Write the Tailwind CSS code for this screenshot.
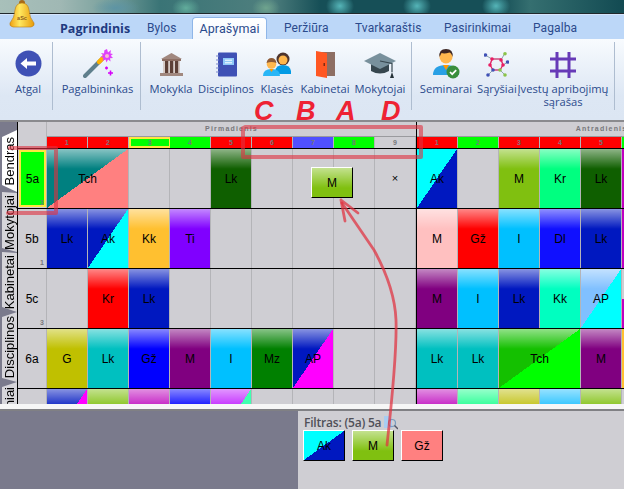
<!DOCTYPE html>
<html lang="lt">
<head>
<meta charset="utf-8">
<title>aSc Timetables</title>
<script src="https://cdn.jsdelivr.net/npm/@tailwindcss/browser@4"></script>
</head>
<body class="m-0 bg-[#cfced3]">
<div class="relative w-[624px] h-[489px] overflow-hidden flex flex-col font-['Liberation_Sans',sans-serif]">

  <!-- title bar -->
  <div class="h-[13px] shrink-0 bg-[radial-gradient(ellipse_14px_12px_at_340px_6px,#55b5b8,transparent),radial-gradient(ellipse_14px_12px_at_417px_6px,#55b5b8,transparent),radial-gradient(ellipse_14px_12px_at_496px_6px,#55b5b8,transparent),radial-gradient(ellipse_14px_10px_at_186px_8px,#62ad9c,transparent),radial-gradient(ellipse_14px_10px_at_266px_8px,#6fa48e,transparent),radial-gradient(ellipse_24px_10px_at_116px_8px,#5d94a4,transparent),linear-gradient(to_right,#a8c0ba,#a0b8b4_60px,#78a09c_110px,#3a7476_160px,#4f7f7e_270px,#164f57_320px,#164f57_500px,#356f70_530px,#124a52_624px)]"></div>
  <div class="h-[1px] shrink-0 bg-[#20282c]"></div>

  <!-- tab strip -->
  <div class="h-[25px] shrink-0 bg-[#bcd7f8] border-t border-[#d5e5fb] flex items-end text-[12px] text-[#2b4a8c] font-['Roboto',sans-serif] tracking-[0.1px] leading-[21px] text-center whitespace-nowrap">
    <div class="w-[58px] ml-[60px] font-bold text-[#1f3a80] text-[12.5px] font-['Open_Sans',sans-serif] tracking-normal">Pagrindinis</div>
    <div class="w-[28px] ml-[29px]">Bylos</div>
    <div class="w-[75px] ml-[17px] h-[22px] rounded-t-[4px] border border-b-0 border-[#8fb6e8] bg-[linear-gradient(#ffffff,#f4f8fd)] leading-[22px] text-[12.5px]">Aprašymai</div>
    <div class="w-[42px] ml-[17px]">Peržiūra</div>
    <div class="w-[60px] ml-[29px]">Tvarkaraštis</div>
    <div class="w-[60px] ml-[29px]">Pasirinkimai</div>
    <div class="w-[41px] ml-[29px]">Pagalba</div>
  </div>

  <!-- ribbon -->
  <div class="h-[81px] shrink-0 bg-[linear-gradient(#f8fbfe,#dde7f4_70%,#dce6f3)] flex text-[11.2px] leading-[13px] text-[#2b4a8c] font-['Open_Sans',sans-serif] text-center pt-[3px] pl-[4px] whitespace-nowrap">
    <div class="w-[48px] flex flex-col items-center shrink-0">
      <div class="h-[38px] flex items-end pb-[3px]">
        <svg width="27" height="27" viewBox="0 0 27 27"><circle cx="13.5" cy="13.5" r="13" fill="#3f51b5"/><path d="M5.5 13.5 12 8v3.6h9v3.8h-9V19z" fill="#fff"/></svg>
      </div>
      <div class="mt-[2px]">Atgal</div>
    </div>
    <div class="w-[1px] h-[68px] bg-[#aebdd0] shrink-0"></div>
    <div class="w-[87px] pl-[2px] flex flex-col items-center shrink-0">
      <div class="h-[38px] flex items-end pb-[1px]">
        <svg width="30" height="30" viewBox="0 0 30 30"><path d="M2 27 19 10" stroke="#5f7f8c" stroke-width="4" stroke-linecap="round"/><path d="M16 13 21 8" stroke="#ffb300" stroke-width="4.5" stroke-linecap="round"/><path d="M24 0l1 3.5L28 1l-.6 3.6 2.6.4-2.2 1.8L30 9l-3 .2.6 3.2-2.6-2-1.4 3-1.2-3-2.8 1.4.8-3-3-.8 2.8-1.4L18 4l3 .5.4-3.2z" fill="#e040fb"/><circle cx="24" cy="7" r="2" fill="#f8bbd0"/><path d="M22 19h3M23.5 17.5v3" stroke="#d500f9" stroke-width="1.4"/><path d="M25 24h5M27.5 21.5v5" stroke="#d500f9" stroke-width="1.6"/></svg>
      </div>
      <div class="mt-[2px]">Pagalbininkas</div>
    </div>
    <div class="w-[1px] h-[68px] bg-[#aebdd0] shrink-0"></div>
    <div class="w-[2px] shrink-0"></div>
    <div class="w-[56px] flex flex-col items-center shrink-0">
      <div class="h-[38px] flex items-end pb-[3px]">
        <svg width="25" height="25" viewBox="0 0 25 25"><path d="M12.5 1 23 7H2z" fill="#a1887f"/><rect x="3" y="7" width="19" height="2" fill="#8d6e63"/><rect x="4" y="9" width="17" height="12" fill="#d7ccc8"/><rect x="6" y="9" width="3.2" height="12" fill="#5d4037"/><rect x="11" y="9" width="3.2" height="12" fill="#5d4037"/><rect x="16" y="9" width="3.2" height="12" fill="#5d4037"/><rect x="1" y="21" width="23" height="3" fill="#a1887f"/></svg>
      </div>
      <div class="mt-[2px]">Mokykla</div>
    </div>
    <div class="w-[54px] flex flex-col items-center shrink-0">
      <div class="h-[38px] flex items-end pb-[3px]">
        <svg width="21" height="25" viewBox="0 0 21 25"><rect x="2" y="0.500" width="19" height="24" rx="1" fill="#3f51b5"/><path d="M0 4h3M0 8h3M0 12h3M0 16h3M0 20h3" stroke="#7986cb" stroke-width="1.2"/><rect x="7" y="6" width="11" height="7" fill="#90caf9"/><path d="M9 8.200h7M9 10.800h7" stroke="#fff" stroke-width="1"/></svg>
      </div>
      <div class="mt-[2px]">Disciplinos</div>
    </div>
    <div class="w-[48px] flex flex-col items-center shrink-0">
      <div class="h-[38px] flex items-end pb-[3px]">
        <svg width="29" height="25" viewBox="0 0 29 25"><circle cx="20" cy="7" r="6.500" fill="#4e342e"/><circle cx="20" cy="8" r="4.500" fill="#ffb74d"/><path d="M12 19q1-6 8-6t8 6v3H12z" fill="#039be5"/><circle cx="8.500" cy="12" r="4.800" fill="#ffb74d"/><path d="M3.500 11q1-5 5-5t5 5q-5-2-10 0z" fill="#8d5a36"/><path d="M0 24q0-7 8.500-7T17 24z" fill="#29b6f6"/><path d="M6.500 17h4l-2 3z" fill="#ff9800"/></svg>
      </div>
      <div class="mt-[2px]">Klasės</div>
    </div>
    <div class="w-[48px] flex flex-col items-center shrink-0">
      <div class="h-[38px] flex items-end pb-[2px]">
        <svg width="19" height="27" viewBox="0 0 19 27"><rect x="3" y="1" width="16" height="24" fill="#8d6e63"/><path d="M0 0 11 2V27L0 25z" fill="#ff5722"/><rect x="7.500" y="12" width="1.500" height="3" fill="#7f2a10"/></svg>
      </div>
      <div class="mt-[2px]">Kabinetai</div>
    </div>
    <div class="w-[62px] flex flex-col items-center shrink-0">
      <div class="h-[38px] flex items-end pb-[1px]">
        <svg width="32" height="27" viewBox="0 0 32 27"><path d="M7 11v8q9 5 18 0v-8z" fill="#37474f"/><path d="M16 1 32 9 16 17 0 9z" fill="#78909c"/><path d="M16 9 28 11.500V20" stroke="#37474f" stroke-width="1.200" fill="none"/><path d="M28 20l2 6h-4z" fill="#263238"/></svg>
      </div>
      <div class="mt-[2px]">Mokytojai</div>
    </div>
    <div class="w-[1px] h-[68px] bg-[#aebdd0] shrink-0"></div>
    <div class="w-[68px] flex flex-col items-center shrink-0">
      <div class="h-[38px] flex items-end pb-[1px] pl-[1px]">
        <svg width="27" height="30" viewBox="0 0 27 30"><circle cx="13" cy="8" r="6.500" fill="#ffb74d"/><path d="M6.500 8q-1-8 6.500-8t6.500 8q-1-4-3-4.500-5 1.500-8 .5z" fill="#3e2723"/><path d="M0 26q0-10 13-10t13 10z" fill="#29a0e5"/><path d="M10 16h6l-3 5z" fill="#ff9800"/><circle cx="20" cy="23" r="6.500" fill="#388e3c"/><path d="M17 23l2.200 2.200 4-4" stroke="#fff" stroke-width="1.700" fill="none"/></svg>
      </div>
      <div class="mt-[2px]">Seminarai</div>
    </div>
    <div class="w-[32px] flex flex-col items-center shrink-0">
      <div class="h-[38px] flex items-end pb-[3px]">
        <svg width="25" height="25" viewBox="0 0 25 25" class="shrink-0"><path d="M8 7 1 3M17 8 21 1M8 7h9M8 7 6 13M17 8l2 5M6 13l3 5M19 13l-3 5M9 18h7M9 18 4 23M16 18l5 5M19 13l5-3" stroke="#90a4ae" stroke-width="1" fill="none"/><path d="M8 7h9l2 6-3 5H9l-3-5z" stroke="#e91e63" stroke-width="1.200" fill="none"/><circle cx="1.500" cy="3" r="1.800" fill="#3f51b5"/><circle cx="21" cy="1.800" r="1.800" fill="#8bc34a"/><circle cx="8" cy="7" r="1.800" fill="#e91e63"/><circle cx="17" cy="8" r="1.800" fill="#e91e63"/><circle cx="6" cy="13" r="1.800" fill="#e91e63"/><circle cx="19" cy="13" r="1.800" fill="#e91e63"/><circle cx="23.500" cy="10" r="1.800" fill="#3f51b5"/><circle cx="9" cy="18" r="1.800" fill="#3f51b5"/><circle cx="16" cy="18" r="1.800" fill="#8bc34a"/><circle cx="4" cy="23" r="1.800" fill="#3f51b5"/><circle cx="21" cy="23" r="1.800" fill="#8bc34a"/></svg>
      </div>
      <div class="mt-[2px] w-[38px] shrink-0">Sąryšiai</div>
    </div>
    <div class="w-[102px] flex flex-col items-center shrink-0">
      <div class="h-[38px] flex items-end pb-[2px]">
        <svg width="26" height="26" viewBox="0 0 26 26"><path d="M7 0V26M19 0V26M0 7H26M0 19H26" stroke="#673ab7" stroke-width="3" fill="none"/></svg>
      </div>
      <div class="mt-[2px]">Įvestų apribojimų<br>sąrašas</div>
    </div>
    <div class="w-[1px] h-[68px] bg-[#aebdd0] shrink-0"></div>
  </div>
  <div class="h-[2px] shrink-0 bg-[#8a8a8e]"></div>

  <!-- timetable -->
  <div class="h-[282px] shrink-0 flex overflow-hidden bg-[#cfced3]">
    <!-- vertical tabs -->
    <div class="w-[18px] shrink-0 bg-[#7a7a8c] border-r border-black pl-[2px] pt-[8px] flex flex-col overflow-hidden text-[13px] leading-[14px] text-black whitespace-nowrap">
      <div class="h-[62px] shrink-0 bg-white flex justify-center items-center [clip-path:polygon(0_7px,100%_0,100%_100%,0_calc(100%-7px))]"><span class="[writing-mode:vertical-rl] rotate-180">Bendras</span></div>
      <div class="h-[60px] shrink-0 bg-[#d6d5da] flex justify-center items-center [clip-path:polygon(0_0,100%_1px,100%_100%,0_calc(100%-4px))]"><span class="[writing-mode:vertical-rl] rotate-180">Mokytojai</span></div>
      <div class="h-[60px] shrink-0 bg-[#d6d5da] flex justify-center items-center [clip-path:polygon(0_0,100%_1px,100%_100%,0_calc(100%-5px))]"><span class="[writing-mode:vertical-rl] rotate-180">Kabinetai</span></div>
      <div class="h-[70px] shrink-0 bg-[#d6d5da] flex justify-center items-center [clip-path:polygon(0_5px,100%_0,100%_100%,0_calc(100%-4px))]"><span class="[writing-mode:vertical-rl] rotate-180">Disciplinos</span></div>
      <div class="h-[80px] shrink-0 bg-[#d6d5da] flex justify-center items-start pt-[5px] [clip-path:polygon(0_5px,100%_0,100%_100%,0_100%)]"><span class="[writing-mode:vertical-rl] rotate-180">Mokiniai</span></div>
    </div>

    <div class="flex-1 min-w-0 flex flex-col text-[12px] text-black">
      <!-- header -->
      <div class="h-[27px] shrink-0 flex border-b border-black">
        <div class="w-[29px] shrink-0 border-r border-[#b4b4b8]"></div>
        <div class="w-[369px] shrink-0 flex flex-col">
          <div class="h-[15px] border-b border-[#9a9a9e] text-center text-[7px] font-bold tracking-[1.2px] leading-[14px] text-[#77777b]">Pirmadienis</div>
          <div class="h-[11px] flex text-[7px] font-bold text-[#77777b] leading-[11px] text-center *:w-[41px] *:shrink-0 *:border-r *:border-[#b4b4b8]">
            <div class="bg-[#ff0000]">1</div><div class="bg-[#ff0000]">2</div><div class="bg-[#00ff00] border-2 !border-[#ffe640] leading-[7px]">3</div><div class="bg-[#00ff00]">4</div><div class="bg-[#ff0000]">5</div><div class="bg-[#ff0000]">6</div><div class="bg-[#5050ff]">7</div><div class="bg-[#00ff00]">8</div><div>9</div>
          </div>
        </div>
        <div class="w-[1px] shrink-0 bg-black"></div>
        <div class="w-[207px] shrink-0 flex flex-col overflow-hidden">
          <div class="h-[15px] border-b border-[#9a9a9e] text-center text-[7px] font-bold tracking-[1.2px] leading-[14px] text-[#77777b] w-[369px]">Antradienis</div>
          <div class="h-[11px] flex text-[7px] font-bold text-[#77777b] leading-[11px] text-center *:w-[41px] *:shrink-0 *:border-r *:border-[#b4b4b8]">
            <div class="bg-[#ff0000]">1</div><div class="bg-[#00ff00]">2</div><div class="bg-[#ff0000]">3</div><div class="bg-[#ff0000]">4</div><div class="bg-[#ff0000]">5</div><div class="bg-[#00ff00]">6</div>
          </div>
        </div>
      </div>

      <!-- 5a -->
      <div class="h-[60px] shrink-0 flex border-b border-black">
        <div class="relative w-[29px] shrink-0 border-r border-[#b4b4b8] flex pl-[1px] py-[1px]">
          <div class="flex-1 border-2 border-[#ffe640] bg-[#00ff00] flex items-center justify-center">5a</div>
          <span class="absolute right-[2px] bottom-[1px] text-[7px] leading-[8px] font-bold text-[#77777b]">3</span>
        </div>
        <div class="w-[369px] shrink-0 flex *:w-[41px] *:shrink-0 *:border-r *:border-[#b4b4b8] *:flex *:items-center *:justify-center">
          <div class="!w-[82px] bg-[#008080] bg-[linear-gradient(to_bottom_right,transparent_50%,#ff8080_50%),linear-gradient(#fff8,#fff0_20px)]">Tch</div>
          <div></div><div></div>
          <div class="bg-[#0f5f00] bg-[linear-gradient(#fff8,#fff0_20px)]">Lk</div>
          <div></div><div></div><div></div>
          <div class="text-[11px]">×</div>
        </div>
        <div class="w-[1px] shrink-0 bg-black"></div>
        <div class="w-[207px] shrink-0 flex overflow-hidden *:w-[41px] *:shrink-0 *:border-r *:border-[#b4b4b8] *:flex *:items-center *:justify-center">
          <div class="bg-[#00ffff] bg-[linear-gradient(to_bottom_right,transparent_50%,#0018c0_50%)]">Ak</div>
          <div></div>
          <div class="bg-[#80c010] bg-[linear-gradient(#fff8,#fff0_20px)]">M</div>
          <div class="bg-[#00ff80] bg-[linear-gradient(#fff8,#fff0_20px)]">Kr</div>
          <div class="bg-[#0f5f00] bg-[linear-gradient(#fff8,#fff0_20px)]">Lk</div>
          <div class="bg-[#c000c0]"></div>
        </div>
      </div>

      <!-- 5b -->
      <div class="h-[60px] shrink-0 flex border-b border-black">
        <div class="relative w-[29px] shrink-0 border-r border-[#b4b4b8] flex items-center justify-center">5b
          <span class="absolute right-[2px] bottom-[1px] text-[7px] leading-[8px] font-bold text-[#77777b]">1</span>
        </div>
        <div class="w-[369px] shrink-0 flex *:w-[41px] *:shrink-0 *:border-r *:border-[#b4b4b8] *:flex *:items-center *:justify-center">
          <div class="bg-[#0018c0] bg-[linear-gradient(#fff8,#fff0_20px)]">Lk</div>
          <div class="bg-[#0018c0] bg-[linear-gradient(to_bottom_right,transparent_50%,#00ffff_50%),linear-gradient(#fff8,#fff0_20px)]">Ak</div>
          <div class="bg-[#ffc030] bg-[linear-gradient(#fff8,#fff0_20px)]">Kk</div>
          <div class="bg-[#8000ff] bg-[linear-gradient(#fff8,#fff0_20px)]">Ti</div>
          <div></div><div></div><div></div><div></div><div></div>
        </div>
        <div class="w-[1px] shrink-0 bg-black"></div>
        <div class="w-[207px] shrink-0 flex overflow-hidden *:w-[41px] *:shrink-0 *:border-r *:border-[#b4b4b8] *:flex *:items-center *:justify-center">
          <div class="bg-[#ffc0c0] bg-[linear-gradient(#fff8,#fff0_20px)]">M</div>
          <div class="bg-[#ff0000] bg-[linear-gradient(#fff8,#fff0_20px)]">Gž</div>
          <div class="bg-[#00c0ff] bg-[linear-gradient(#fff8,#fff0_20px)]">I</div>
          <div class="bg-[#1010ff] bg-[linear-gradient(#fff8,#fff0_20px)]">Dl</div>
          <div class="bg-[#0018c0] bg-[linear-gradient(#fff8,#fff0_20px)]">Lk</div>
          <div class="bg-[#c000c0]"></div>
        </div>
      </div>

      <!-- 5c -->
      <div class="h-[60px] shrink-0 flex border-b border-black">
        <div class="relative w-[29px] shrink-0 border-r border-[#b4b4b8] flex items-center justify-center">5c
          <span class="absolute right-[2px] bottom-[1px] text-[7px] leading-[8px] font-bold text-[#77777b]">3</span>
        </div>
        <div class="w-[369px] shrink-0 flex *:w-[41px] *:shrink-0 *:border-r *:border-[#b4b4b8] *:flex *:items-center *:justify-center">
          <div></div>
          <div class="bg-[#ff0000] bg-[linear-gradient(#fff8,#fff0_20px)]">Kr</div>
          <div class="bg-[#0018c0] bg-[linear-gradient(#fff8,#fff0_20px)]">Lk</div>
          <div></div><div></div><div></div><div></div><div></div><div></div>
        </div>
        <div class="w-[1px] shrink-0 bg-black"></div>
        <div class="w-[207px] shrink-0 flex overflow-hidden *:w-[41px] *:shrink-0 *:border-r *:border-[#b4b4b8] *:flex *:items-center *:justify-center">
          <div class="bg-[#800080] bg-[linear-gradient(#fff8,#fff0_20px)]">M</div>
          <div class="bg-[#00c0ff] bg-[linear-gradient(#fff8,#fff0_20px)]">I</div>
          <div class="bg-[#0018c0] bg-[linear-gradient(#fff8,#fff0_20px)]">Lk</div>
          <div class="bg-[#00ffc0] bg-[linear-gradient(#fff8,#fff0_20px)]">Kk</div>
          <div class="bg-[#80c0ff] bg-[linear-gradient(to_bottom_right,transparent_50%,#00ffff_50%),linear-gradient(#fff8,#fff0_20px)]">AP</div>
          <div class="bg-[linear-gradient(#cfced3_30px,#c000c0_30px)]"></div>
        </div>
      </div>

      <!-- 6a -->
      <div class="h-[60px] shrink-0 flex border-b border-black">
        <div class="w-[29px] shrink-0 border-r border-[#b4b4b8] flex items-center justify-center">6a</div>
        <div class="w-[369px] shrink-0 flex *:w-[41px] *:shrink-0 *:border-r *:border-[#b4b4b8] *:flex *:items-center *:justify-center">
          <div class="bg-[#c0c000] bg-[linear-gradient(#fff8,#fff0_20px)]">G</div>
          <div class="bg-[#00c0c0] bg-[linear-gradient(#fff8,#fff0_20px)]">Lk</div>
          <div class="bg-[#0000ff] bg-[linear-gradient(#fff8,#fff0_20px)]">Gž</div>
          <div class="bg-[#800080] bg-[linear-gradient(#fff8,#fff0_20px)]">M</div>
          <div class="bg-[#00c0ff] bg-[linear-gradient(#fff8,#fff0_20px)]">I</div>
          <div class="bg-[#008000] bg-[linear-gradient(#fff8,#fff0_20px)]">Mz</div>
          <div class="bg-[#0018c0] bg-[linear-gradient(to_bottom_right,transparent_50%,#ff00ff_50%),linear-gradient(#fff8,#fff0_20px)]">AP</div>
          <div></div><div></div>
        </div>
        <div class="w-[1px] shrink-0 bg-black"></div>
        <div class="w-[207px] shrink-0 flex overflow-hidden *:w-[41px] *:shrink-0 *:border-r *:border-[#b4b4b8] *:flex *:items-center *:justify-center">
          <div class="bg-[#00c0c0] bg-[linear-gradient(#fff8,#fff0_20px)]">Lk</div>
          <div class="bg-[#00c0c0] bg-[linear-gradient(#fff8,#fff0_20px)]">Lk</div>
          <div class="!w-[82px] bg-[#14c000] bg-[linear-gradient(to_bottom_right,transparent_50%,#00ff00_50%),linear-gradient(#fff8,#fff0_20px)]">Tch</div>
          <div class="bg-[#800080] bg-[linear-gradient(#fff8,#fff0_20px)]">M</div>
          <div class="bg-[#ffc030]"></div>
        </div>
      </div>

      <!-- next class, cut off by the panel -->
      <div class="h-[60px] shrink-0 flex">
        <div class="w-[29px] shrink-0 border-r border-[#b4b4b8]"></div>
        <div class="w-[369px] shrink-0 flex *:w-[41px] *:shrink-0 *:border-r *:border-[#b4b4b8]">
          <div class="bg-[#0018c0] bg-[linear-gradient(to_bottom_right,transparent_50%,#ff00ff_50%),linear-gradient(#fff8,#fff0_20px)]"></div>
          <div class="bg-[#80c010] bg-[linear-gradient(#fff8,#fff0_20px)]"></div>
          <div class="bg-[#c010c0] bg-[linear-gradient(#fff8,#fff0_20px)]"></div>
          <div class="bg-[#0000ff] bg-[linear-gradient(#fff8,#fff0_20px)]"></div>
          <div class="bg-[#c020ff] bg-[linear-gradient(to_bottom_right,transparent_50%,#40ffb0_50%),linear-gradient(#fff8,#fff0_20px)]"></div>
          <div></div><div></div><div></div><div></div>
        </div>
        <div class="w-[1px] shrink-0 bg-black"></div>
        <div class="w-[207px] shrink-0 flex overflow-hidden *:w-[41px] *:shrink-0 *:border-r *:border-[#b4b4b8]">
          <div class="bg-[#c010c0] bg-[linear-gradient(#fff8,#fff0_20px)]"></div>
          <div class="bg-[#20ff90] bg-[linear-gradient(#fff8,#fff0_20px)]"></div>
          <div class="bg-[#c0c010] bg-[linear-gradient(#fff8,#fff0_20px)]"></div>
          <div class="bg-[#20c0ff] bg-[linear-gradient(#fff8,#fff0_20px)]"></div>
          <div class="bg-[#80c010] bg-[linear-gradient(#fff8,#fff0_20px)]"></div>
          <div></div>
        </div>
      </div>
    </div>
  </div>

  <div class="h-[5px] shrink-0 bg-[#f6f6f6]"></div>
  <div class="h-[2px] shrink-0 bg-[#808084]"></div>

  <!-- bottom -->
  <div class="flex-1 flex min-h-0">
    <div class="w-[298px] shrink-0 bg-[#7a7a8c]"></div>
    <div class="flex-1 bg-[#cfced3] pl-[5px] pt-[4px]">
      <div class="flex items-center h-[15px] text-[12px] font-bold text-[#505058] font-['Open_Sans',sans-serif] tracking-[-0.2px]">
        <span class="w-[81px] pl-[1px] whitespace-nowrap font-semibold">Filtras: (5a) 5a</span>
        <svg width="14" height="15" viewBox="0 0 14 15" class="shrink-0"><path d="M0 1h5l3 3v9H0z" fill="#a8cdf2"/><circle cx="8" cy="8" r="3.500" fill="none" stroke="#7a9cc0" stroke-width="1.200"/><path d="M10.500 10.500 14 14" stroke="#556" stroke-width="1.400"/></svg>
      </div>
      <div class="flex gap-[7px] text-[12px] text-black">
        <div class="w-[42px] h-[31px] border-t border-l border-white border-r border-b !border-r-black !border-b-black flex items-center justify-center bg-[#00ffff] bg-[linear-gradient(to_bottom_right,transparent_50%,#0018c0_50%)]">Ak</div>
        <div class="w-[42px] h-[31px] border-t border-l border-white border-r border-b !border-r-black !border-b-black flex items-center justify-center bg-[#80c010] bg-[linear-gradient(#fff8,#fff0_20px)]">M</div>
        <div class="w-[42px] h-[31px] border-t border-l border-white border-r border-b !border-r-black !border-b-black flex items-center justify-center bg-[#ff8080]">Gž</div>
      </div>
    </div>
  </div>

  <!-- dragged card over the grid -->
  <div class="absolute left-[311px] top-[167px] w-[42px] h-[31px] border-t border-l border-white border-r border-b !border-r-black !border-b-black flex items-center justify-center bg-[#80c010] bg-[linear-gradient(#fff8,#fff0_20px)] text-[12px]">M</div>

  <!-- hand-drawn annotation -->
  <svg class="absolute inset-0 pointer-events-none blur-[0.5px]" width="624" height="489" viewBox="0 0 624 489" fill="none">
    <g stroke="#e0303f" stroke-opacity="0.6" stroke-width="4" stroke-linejoin="round" stroke-linecap="round">
      <path d="M10 148H56V213H8"/>
      <path d="M245 127H421V157H243V128"/>
    </g>
    <g stroke="#e0303f" stroke-opacity="0.72" stroke-width="2.800" stroke-linejoin="round" stroke-linecap="round">
      <path d="M387 445C392 400 397 350 396 320 395 295 385 270 374 250L342 203"/>
      <path d="M341 200 345 221M341 200 358 213"/>
    </g>
  </svg>
  <div class="absolute left-[254px] top-[96px] text-[27px] leading-[30px] italic font-bold text-[#ee2233]">C</div>
  <div class="absolute left-[296px] top-[96px] text-[27px] leading-[30px] italic font-bold text-[#ee2233]">B</div>
  <div class="absolute left-[336px] top-[96px] text-[27px] leading-[30px] italic font-bold text-[#ee2233]">A</div>
  <div class="absolute left-[381px] top-[96px] text-[27px] leading-[30px] italic font-bold text-[#ee2233]">D</div>

  <!-- logo bell -->
  <svg class="absolute left-[9px] top-0" width="26" height="29" viewBox="0 0 26 29">
    <defs><linearGradient id="b" x1="0" x2="1"><stop offset="0" stop-color="#f0a010"/><stop offset=".4" stop-color="#ffe860"/><stop offset="1" stop-color="#e89a08"/></linearGradient></defs>
    <circle cx="13" cy="3" r="3" fill="#a86a18"/>
    <path d="M13 3q6 0 7 7 .5 8 5 13 1 3-3 4H4q-4-1-3-4 4.500-5 5-13 1-7 7-7z" fill="url(#b)" stroke="#b97a10" stroke-width=".6"/>
    <text x="13" y="20" text-anchor="middle" font-size="5.500" font-weight="bold" fill="#8a5a20" font-family="Liberation Sans">aSc</text>
  </svg>
</div>
</body>
</html>
